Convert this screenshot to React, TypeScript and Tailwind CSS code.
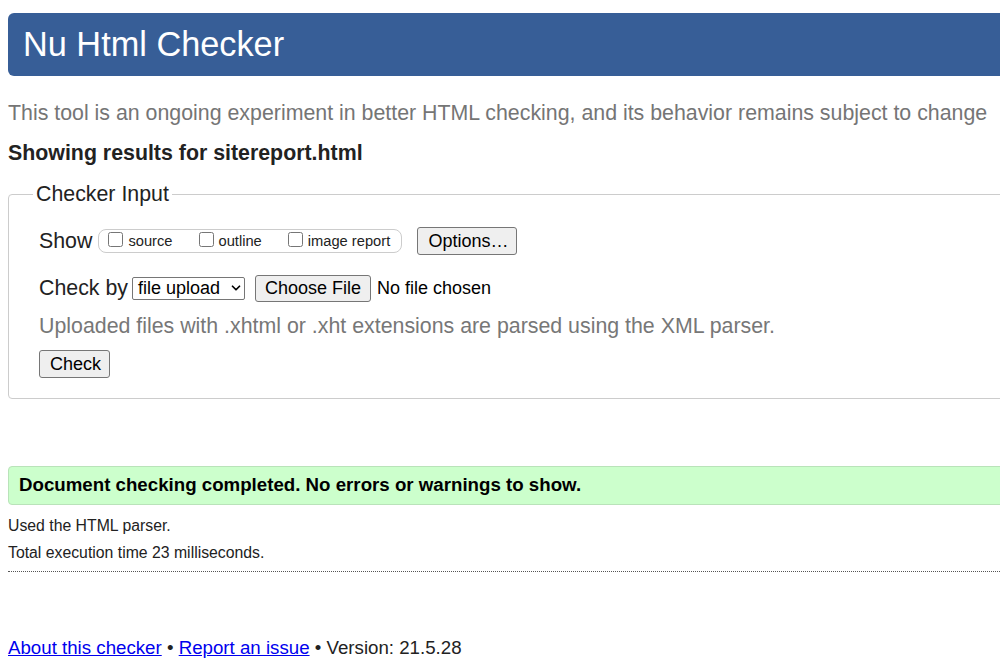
import { ChevronDown } from 'lucide-react';

const checks = ['source', 'outline', 'image report'];

function GrayButton({ label, className = '' }: { label: string; className?: string }) {
  return (
    <button
      type="button"
      className={`h-[28px] px-[10px] bg-[#efefef] border border-[#767676] rounded-[3px] text-[18px] leading-none text-black ${className}`}
    >
      {label}
    </button>
  );
}

export default function App() {
  return (
    <div className="w-[1000px] h-[659px] overflow-hidden bg-white font-['Liberation_Sans',Arial,sans-serif] text-[#222]">
      <div className="w-[1060px] pl-[8px]">
        {/* Header */}
        <div className="mt-[13px] h-[63px] rounded-[6px] bg-[#375e97] flex items-center pl-[15px]">
          <h1 className="text-[34.3px] leading-none text-white">Nu Html Checker</h1>
        </div>

        <p className="mt-[25px] h-[24px] leading-[24px] text-[21.35px] text-[#757575] whitespace-nowrap">
          This tool is an ongoing experiment in better HTML checking, and its behavior remains subject to change
        </p>

        <p className="mt-[16px] h-[24px] leading-[24px] text-[21.35px] font-bold text-[#222]">
          Showing results for sitereport.html
        </p>

        {/* Checker input */}
        <fieldset className="mt-[18px] border border-[#cccccc] rounded-[4px] pl-[30px] pb-[20px]">
          <legend className="-ml-[6px] px-[3px] text-[21.35px] leading-[23px] text-[#222]">Checker Input</legend>

          <div className="mt-[19px] h-[32px] flex items-center">
            <span className="text-[21.35px] text-[#222]">Show</span>
            <div className="ml-[6px] h-[24px] w-[304px] border border-[#cccccc] rounded-[8px] flex items-center pl-[9px]">
              {checks.map((c, i) => (
                <label key={c} className={`flex items-center text-[14.7px] text-[#222] ${i > 0 ? 'ml-[26px]' : ''}`}>
                  <input type="checkbox" className="w-[15px] h-[15px] m-0 -mt-[4px]" />
                  <span className="ml-[5px]">{c}</span>
                </label>
              ))}
            </div>
            <GrayButton label="Options…" className="ml-[15px] w-[100px]" />
          </div>

          <div className="mt-[15px] h-[32px] flex items-center">
            <span className="text-[21.35px] text-[#222]">Check by</span>
            <span className="ml-[4px] h-[23px] w-[113px] border border-[#767676] rounded-[2px] bg-white flex items-center pl-[5px] text-[18px] text-black">
              file upload
              <ChevronDown className="w-[14px] h-[14px] ml-[9px]" strokeWidth={3} />
            </span>
            <button
              type="button"
              className="ml-[10px] h-[27px] w-[116px] bg-[#efefef] border border-[#767676] rounded-[3px] text-[18px] leading-none text-black"
            >
              Choose File
            </button>
            <span className="ml-[6px] text-[18px] text-black">No file chosen</span>
          </div>

          <p className="mt-[10px] h-[24px] leading-[24px] text-[21.35px] text-[#777]">
            Uploaded files with .xhtml or .xht extensions are parsed using the XML parser.
          </p>

          <GrayButton label="Check" className="mt-[12px] w-[71px]" />
        </fieldset>

        {/* Result */}
        <div className="mt-[67px] h-[39px] border border-[#b9e3b9] rounded-[4px] bg-[#ccffcc] flex items-center pl-[10px]">
          <span className="text-[18.7px] font-bold text-black">
            Document checking completed. No errors or warnings to show.
          </span>
        </div>

        <p className="mt-[10px] h-[22px] leading-[22px] text-[15.8px] text-[#222]">Used the HTML parser.</p>
        <p className="mt-[5px] h-[22px] leading-[22px] text-[15.8px] text-[#222]">Total execution time 23 milliseconds.</p>
        <div className="mt-[7px] border-t border-dotted border-[#555]" />

        {/* Footer */}
        <p className="mt-[65px] h-[22px] leading-[22px] text-[18.7px] text-[#222]">
          <a href="#" className="text-[#0000ee] underline">About this checker</a>
          {' • '}
          <a href="#" className="text-[#0000ee] underline">Report an issue</a>
          {' • Version: 21.5.28'}
        </p>
      </div>
    </div>
  );
}
